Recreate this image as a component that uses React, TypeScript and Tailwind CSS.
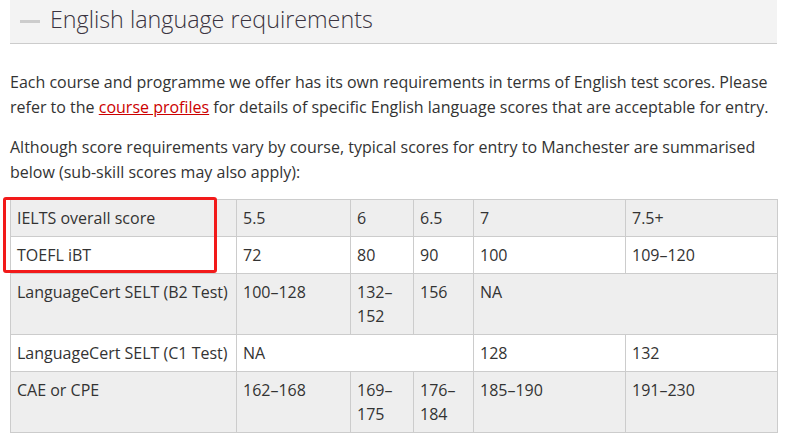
const rowGray = "bg-[#eeeeee]";

const cell = "border border-[#cccccc] px-[6px] py-[6px] align-top leading-6";

const App = () => {
  return (
    <div
      className="w-[785px] h-[435px] overflow-hidden bg-white px-[10px] text-[#333333]"
      style={{ fontFamily: '"Open Sans", sans-serif' }}
    >
      <div className="flex h-[44px] w-[767px] items-center bg-[#f3f3f3] border-b border-[#cccccc]">
        <span className="ml-[10px] mr-[10px] h-[3px] w-[20px] bg-[#cccccc]" />
        <h2 className="text-[23.3px] font-light leading-none text-[#3a3340] -mt-[4px]">
          English language requirements
        </h2>
      </div>

      <p className="mt-[26px] text-[16px] leading-[25px]">
        Each course and programme we offer has its own requirements in terms of English test scores. Please
        refer to the{" "}
        <a href="#" className="text-[#cc0000] underline">
          course profiles
        </a>{" "}
        for details of specific English language scores that are acceptable for entry.
      </p>

      <p className="mt-[15px] text-[16px] leading-[25px]">
        Although score requirements vary by course, typical scores for entry to Manchester are summarised
        below (sub-skill scores may also apply):
      </p>

      <div className="relative mt-[14px]">
        <table className="w-[767px] table-fixed border-collapse text-[16px]">
          <colgroup>
            <col className="w-[226px]" />
            <col className="w-[114px]" />
            <col className="w-[63px]" />
            <col className="w-[60px]" />
            <col className="w-[152px]" />
            <col className="w-[152px]" />
          </colgroup>
          <tbody>
            <tr className={rowGray}>
              <td className={cell}>IELTS overall score</td>
              <td className={cell}>5.5</td>
              <td className={cell}>6</td>
              <td className={cell}>6.5</td>
              <td className={cell}>7</td>
              <td className={cell}>7.5+</td>
            </tr>
            <tr className="bg-white">
              <td className={cell}>TOEFL iBT</td>
              <td className={cell}>72</td>
              <td className={cell}>80</td>
              <td className={cell}>90</td>
              <td className={cell}>100</td>
              <td className={cell}>109–120</td>
            </tr>
            <tr className={rowGray}>
              <td className={cell}>LanguageCert SELT (B2 Test)</td>
              <td className={cell}>100–128</td>
              <td className={cell}>132–152</td>
              <td className={cell}>156</td>
              <td className={cell} colSpan={2}>
                NA
              </td>
            </tr>
            <tr className="bg-white">
              <td className={cell}>LanguageCert SELT (C1 Test)</td>
              <td className={cell} colSpan={3}>
                NA
              </td>
              <td className={cell}>128</td>
              <td className={cell}>132</td>
            </tr>
            <tr className={rowGray}>
              <td className={cell}>CAE or CPE</td>
              <td className={cell}>162–168</td>
              <td className={cell}>169–175</td>
              <td className={cell}>176–184</td>
              <td className={cell}>185–190</td>
              <td className={cell}>191–230</td>
            </tr>
          </tbody>
        </table>
        <div className="pointer-events-none absolute left-[-7px] top-[-2px] h-[76px] w-[214px] rounded-[3px] border-[3px] border-[#f21a1a]" />
      </div>
    </div>
  );
};

export default App;
